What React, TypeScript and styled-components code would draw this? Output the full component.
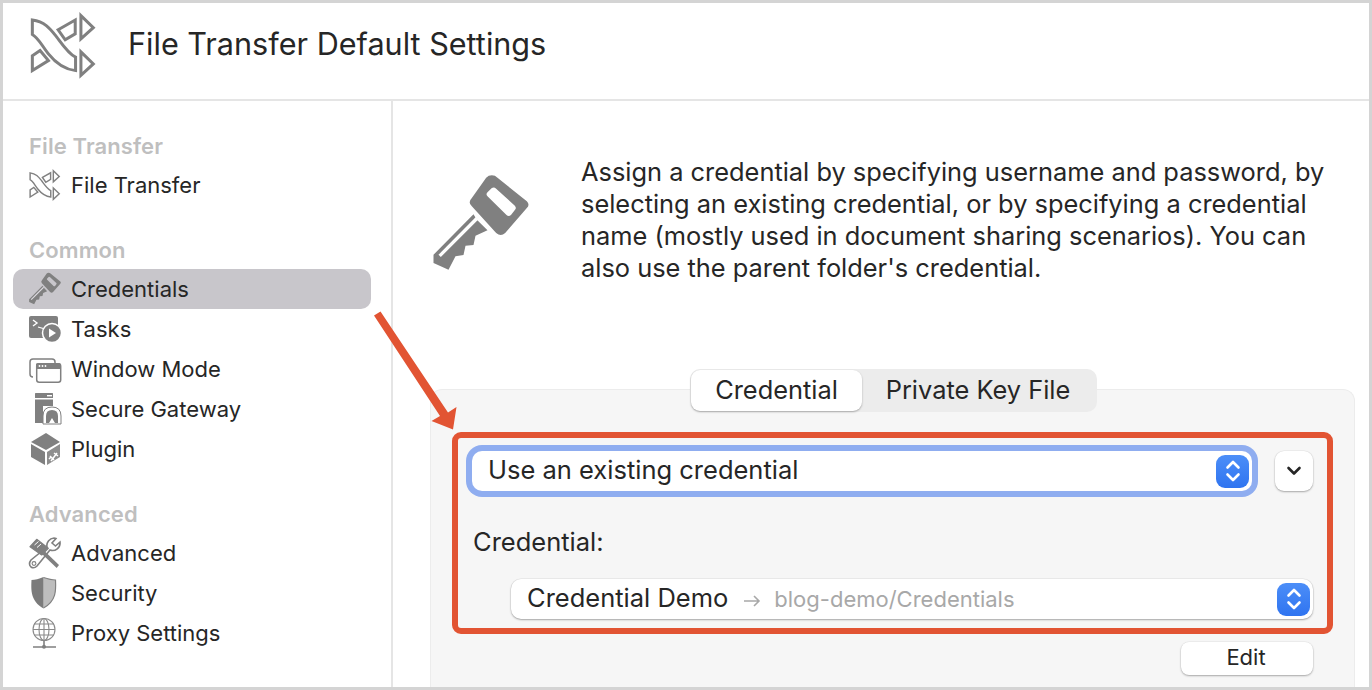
import React from "react";
import styled, { createGlobalStyle } from "styled-components";

const Global = createGlobalStyle`
  html, body { margin: 0; padding: 0; width: 1372px; height: 690px; overflow: hidden; background: #fff; }
  * { box-sizing: border-box; }
  body { font-family: Inter, "Liberation Sans", sans-serif; color: #262626; }
`;

const Frame = styled.div`
  width: 1372px; height: 690px; border: 3px solid #d4d4d4; background: #fff;
  display: flex; flex-direction: column; overflow: hidden; position: relative;
`;
const Header = styled.header`
  height: 98px; flex: none; border-bottom: 2px solid #e5e5e5;
  display: flex; align-items: center; padding: 0 0 12px 27px; gap: 31px;
`;
const Title = styled.h1`
  margin: 0 0 3px; font-size: 30.6px; font-weight: 400; color: #262626;
`;
const Body = styled.div`flex: 1; display: flex; min-height: 0;`;
const Sidebar = styled.nav`
  width: 390px; flex: none; border-right: 2px solid #e5e5e5;
  padding: 24px 20px 0 10px; display: flex; flex-direction: column; gap: 24px;
`;
const Section = styled.section`display: flex; flex-direction: column;`;
const SectionTitle = styled.div`
  height: 40px; line-height: 42px; padding-left: 16px; font-size: 22px; font-weight: 600; color: #bfbfbf; letter-spacing: .1px;
`;
const Item = styled.div<{ $active?: boolean }>`
  height: 40px; display: flex; align-items: center; padding-left: 15px; gap: 9px; border-radius: 10px;
  font-size: 22px; color: #262626; background: ${(p) => (p.$active ? "#c8c6cb" : "transparent")};
`;
const Main = styled.main`flex: 1; min-width: 0; padding: 55px 14px 0 37px;`;
const Intro = styled.div`display: flex; gap: 49px; align-items: flex-start; height: 233px;`;
const IntroText = styled.p`
  margin: 0; width: 750px; font-size: 25.4px; line-height: 32px; color: #262626;
`;
const BigKey = styled.svg`width: 102px; height: 100px; flex: none; margin-top: 17px; display: block;`;
const Panel = styled.div`
  height: 298px; background: #f6f6f6; border: 1px solid #ececec; border-bottom: none; border-radius: 12px 12px 0 0;
  display: flex; flex-direction: column;
`;
const Tabs = styled.div`
  align-self: center; margin: -21px 0 0 2px; height: 43px; width: 407px; background: #ececec;
  border-radius: 10px; display: flex; align-items: stretch; padding: 1px;
`;
const Tab = styled.div<{ $active?: boolean }>`
  display: flex; align-items: center; justify-content: center; padding-bottom: 2px;
  font-size: 25.4px; color: #262626; border-radius: 9px;
  width: ${(p) => (p.$active ? "171px" : "232px")};
  background: ${(p) => (p.$active ? "#fff" : "transparent")};
  box-shadow: ${(p) => (p.$active ? "0 1px 2px rgba(0,0,0,.3)" : "none")};
`;
const SelectRow = styled.div`
  display: flex; align-items: center; margin: 39px 41px 0 41px; gap: 23px;
`;
const SelectField = styled.div<{ $focus?: boolean; $width: number }>`
  width: ${(p) => p.$width}px; height: 40px; flex: none; background: #fff; border-radius: 10px;
  display: flex; align-items: center; padding: 0 3px 0 16px; font-size: 25.5px; color: #262626;
  box-shadow: ${(p) => (p.$focus ? "0 0 0 6px #8fadf0" : "0 1px 2px rgba(0,0,0,.3), 0 0 0 .5px rgba(0,0,0,.08)")};
`;
const SelectText = styled.span`flex: 1; min-width: 0; white-space: nowrap; padding-bottom: 4px;`;
const PathHint = styled.span`font-size: 22px; color: #a8a8a8; margin-left: 13px;`;
const ArrowHint = styled.svg`width: 18px; height: 14px; margin-left: 15px; vertical-align: -1px;`;
const Stepper = styled.div`
  width: 33px; height: 33px; flex: none; border-radius: 9px; background: linear-gradient(#4c8ef8, #2f74f0);
  display: flex; align-items: center; justify-content: center;
`;
const Disclosure = styled.div`
  width: 38px; height: 40px; flex: none; background: #fff; border-radius: 9px;
  box-shadow: 0 1px 2px rgba(0,0,0,.3), 0 0 0 .5px rgba(0,0,0,.06);
  display: flex; align-items: center; justify-content: center;
`;
const FieldLabel = styled.div`
  margin: 33px 0 0 42px; height: 36px; line-height: 36px; font-size: 25.5px; color: #262626;
`;
const IndentRow = styled.div`margin: 19px 0 0 80px;`;
const EditRow = styled.div`display: flex; justify-content: flex-end; margin: 23px 41px 0 0;`;
const EditButton = styled.div`
  width: 132px; height: 33px; background: #fff; border-radius: 8px; display: flex; align-items: center; justify-content: center;
  padding: 0 2px 4px 0; font-size: 22px; color: #262626; box-shadow: 0 1px 2px rgba(0,0,0,.3), 0 0 0 .5px rgba(0,0,0,.06);
`;
const Highlight = styled.div`
  position: absolute; left: 449px; top: 429px; width: 881px; height: 202px;
  border: 6px solid #e25433; border-radius: 9px; pointer-events: none;
`;
const CalloutArrow = styled.svg`position: absolute; left: 367px; top: 305px; width: 90px; height: 125px; pointer-events: none;`;

const G = "#808080";

const LogoSvg = styled.svg`flex: none; display: block;`;

function LogoGlyph({ size }: { size: number }) {
  return (
    <LogoSvg width={size} height={size} viewBox="90 35 200 200" fill="none" stroke={G} strokeWidth={9}>
      <path d="M97 59C135 64 150 85 170 110C185 130 205 160 226 170L226 210C190 206 165 185 145 160C125 135 115 112 97 102Z" />
      <path d="M174 88L225 59V100L195 118Z" />
      <path d="M242 46L279 82L242 115Z" />
      <path d="M120 150L145 180L97 210V166Z" />
      <path d="M242 154L279 190L242 224Z" />
    </LogoSvg>
  );
}

const keyBody = "M190 164L70 285V310L115 330L136 290L160 286L166 258L190 256L196 228L232 212L200 180Z";
const keySlit = "M197 172L85 285L92 292L203 181Z";
const keyHead = "M245 47Q255 47 262 54L350 125Q360 135 350 145L285 220Q272 232 258 220L185 140Q172 128 185 115L228 54Q235 47 245 47ZM232 110Q226 104 232 98L245 85Q252 81 258 87L314 138Q320 145 314 151L303 165Q296 172 289 166Z";

function KeyPaths({ slit }: { slit: string }) {
  return (
    <>
      <path d={keyHead} fill={G} fillRule="evenodd" />
      <path d={keyBody} fill={G} />
      <path d={keySlit} fill={slit} />
    </>
  );
}

const IconBox = styled.svg`width: 34px; height: 34px; flex: none; display: block;`;
const LogoSlot = styled.div`width: 34px; height: 34px; flex: none; display: flex; align-items: center; padding-left: 1px;`;

const FileIcon = () => (
  <LogoSlot>
    <LogoGlyph size={32} />
  </LogoSlot>
);
const KeyIcon = () => (
  <IconBox viewBox="60 40 305 305">
    <KeyPaths slit="#dddbe0" />
  </IconBox>
);
const TasksIcon = () => (
  <IconBox viewBox="0 0 34 34">
    <path d="M3 4H28Q30 4 30 6V24Q30 26 28 26H3Q1 26 1 24V6Q1 4 3 4Z" fill={G} />
    <path d="M5 8L9 11L5 14" fill="none" stroke="#fff" strokeWidth="1.4" />
    <path d="M10 15L17 17" stroke="#fff" strokeWidth="1.2" />
    <circle cx="24" cy="21" r="9.5" fill={G} stroke="#fff" strokeWidth="1.5" />
    <path d="M21 16.5L28 21L21 25.5Z" fill="#fff" />
  </IconBox>
);
const WindowIcon = () => (
  <IconBox viewBox="0 0 34 34">
    <path d="M5 25Q2 25 2 22V10Q2 7 5 7H24Q27 7 27 10V11" fill="none" stroke={G} strokeWidth="1.5" />
    <rect x="8.7" y="11.7" width="24" height="18.6" rx="2.5" fill="#fff" stroke={G} strokeWidth="1.5" />
    <path d="M8 12Q8 11 11 11H31Q33 11 33 14V17H8Z" fill={G} />
    <circle cx="11.5" cy="14" r=".9" fill="#fff" />
    <circle cx="14.5" cy="14" r=".9" fill="#fff" />
    <circle cx="17.5" cy="14" r=".9" fill="#fff" />
  </IconBox>
);
const GatewayIcon = () => (
  <IconBox viewBox="0 0 34 34">
    <rect x="7" y="1" width="18" height="5" rx=".5" fill={G} />
    <rect x="19" y="3" width="5" height="1.4" fill="#fff" />
    <path d="M7 7.5H25V14H15V31H7Z" fill={G} />
    <path d="M15 32V24Q15 15 24 15Q33 15 33 24V32Z" fill="#fff" stroke={G} strokeWidth="1" />
    <path d="M18 31V24Q18 18 24 18Q30 18 30 24V31H27L24 26L21 31Z" fill={G} />
  </IconBox>
);
const PluginIcon = () => (
  <IconBox viewBox="0 0 34 34">
    <path d="M18 1L32 10L18 18L3 10Z" fill={G} />
    <path d="M3 12L17 20V33L3 25Z" fill={G} />
    <path d="M19 20L32 12V25L19 33Z" fill="#8e8e8e" />
    <path d="M21 27L23 25M23 29L29 21M26 21L30 24M22 24L26 28" stroke="#fff" strokeWidth="1.5" fill="none" />
  </IconBox>
);
const ToolsIcon = () => (
  <IconBox viewBox="0 0 34 34">
    <path d="M26 2A7.5 7.5 0 0 0 19 11L3 24Q0 28 3 31Q6 33 9 30L22 14A7.5 7.5 0 0 0 32 6L27.5 10L24 7L28 2.5Q27 2 26 2Z" fill="#fff" stroke={G} strokeWidth="1.6" />
    <circle cx="6" cy="27.5" r="1.9" fill="none" stroke={G} strokeWidth="1.1" />
    <path d="M2 10.7L8.7 3.3L20.3 12.3L13.7 19Z" fill={G} stroke={G} strokeWidth="1.2" strokeLinejoin="round" />
    <path d="M17 15.5L31 29L28.7 32L14 18Z" fill={G} />
    <path d="M6.5 9L10.5 5.5M9 11.5L13 8" stroke="#fff" strokeWidth="1" />
  </IconBox>
);
const ShieldIcon = () => (
  <IconBox viewBox="0 0 34 34">
    <path d="M15.5 1.5C20 3 24 4 27.5 4C28 14 28.5 25 15.5 32" fill="#bdbdbd" stroke={G} strokeWidth="1.2" />
    <path d="M15.5 1C11 3 7 4 3.5 4C3 14 2.5 25 15.5 32.5Z" fill="#7b7b7b" />
  </IconBox>
);
const ProxyIcon = () => (
  <IconBox viewBox="0 0 34 34">
    <g fill="none" stroke="#8a8a8a" strokeWidth="1.1">
      <circle cx="16" cy="13.5" r="11" />
      <ellipse cx="16" cy="13.5" rx="5" ry="11" />
      <path d="M16 2.5V24.5M6 8H26M5 13.5H27M6 19H26" />
    </g>
    <path d="M16 25V31M5 31H28" stroke={G} strokeWidth="1.6" />
    <circle cx="16" cy="30.7" r="2" fill={G} />
  </IconBox>
);

const StepperIcon = () => (
  <Stepper>
    <svg width="20" height="26" viewBox="0 0 20 26" fill="none" stroke="#fff" strokeWidth="2.6" strokeLinecap="round" strokeLinejoin="round">
      <path d="M4.5 9.5L10 4L15.5 9.5" />
      <path d="M4.5 16.5L10 22L15.5 16.5" />
    </svg>
  </Stepper>
);

export default function App() {
  return (
    <>
      <Global />
      <Frame>
        <Header>
          <LogoGlyph size={67} />
          <Title>File Transfer Default Settings</Title>
        </Header>
        <Body>
          <Sidebar>
            <Section>
              <SectionTitle>File Transfer</SectionTitle>
              <Item><FileIcon />File Transfer</Item>
            </Section>
            <Section>
              <SectionTitle>Common</SectionTitle>
              <Item $active><KeyIcon />Credentials</Item>
              <Item><TasksIcon />Tasks</Item>
              <Item><WindowIcon />Window Mode</Item>
              <Item><GatewayIcon />Secure Gateway</Item>
              <Item><PluginIcon />Plugin</Item>
            </Section>
            <Section>
              <SectionTitle>Advanced</SectionTitle>
              <Item><ToolsIcon />Advanced</Item>
              <Item><ShieldIcon />Security</Item>
              <Item><ProxyIcon />Proxy Settings</Item>
            </Section>
          </Sidebar>
          <Main>
            <Intro>
              <BigKey viewBox="60 40 305 300"><KeyPaths slit="#fff" /></BigKey>
              <IntroText>
                Assign a credential by specifying username and password, by selecting an existing credential, or by specifying a credential name (mostly used in document sharing scenarios). You can also use the parent folder's credential.
              </IntroText>
            </Intro>
            <Panel>
              <Tabs>
                <Tab $active>Credential</Tab>
                <Tab>Private Key File</Tab>
              </Tabs>
              <SelectRow>
                <SelectField $focus $width={780}>
                  <SelectText>Use an existing credential</SelectText>
                  <StepperIcon />
                </SelectField>
                <Disclosure>
                  <svg width="18" height="12" viewBox="0 0 18 12" fill="none" stroke="#262626" strokeWidth="2.6" strokeLinecap="round" strokeLinejoin="round">
                    <path d="M3.5 3L9 8.5L14.5 3" />
                  </svg>
                </Disclosure>
              </SelectRow>
              <FieldLabel>Credential:</FieldLabel>
              <IndentRow>
                <SelectField $width={802}>
                  <SelectText>
                    Credential Demo
                    <ArrowHint viewBox="0 0 18 14" fill="none" stroke="#a8a8a8" strokeWidth="1.6">
                      <path d="M1 7H16M11 2L16 7L11 12" />
                    </ArrowHint>
                    <PathHint>blog-demo/Credentials</PathHint>
                  </SelectText>
                  <StepperIcon />
                </SelectField>
              </IndentRow>
              <EditRow>
                <EditButton>Edit</EditButton>
              </EditRow>
            </Panel>
          </Main>
        </Body>
        <Highlight />
        <CalloutArrow viewBox="367 305 90 125">
          <path d="M371 312.5L377.5 308.5L445 409.5L453.5 404L450 426.5L428.5 418L437 413Z" fill="#e25433" />
        </CalloutArrow>
      </Frame>
    </>
  );
}
